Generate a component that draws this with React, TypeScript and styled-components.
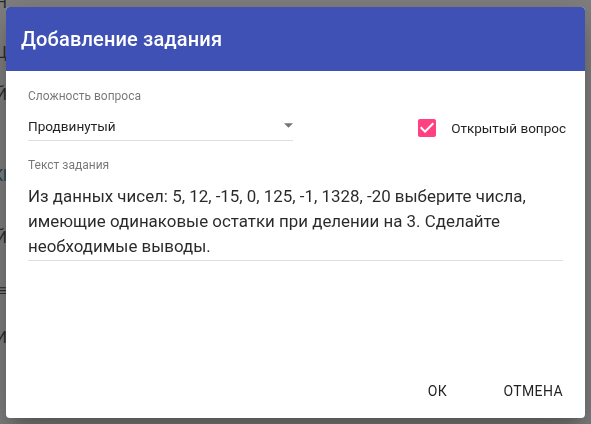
import React from "react";
import styled, { createGlobalStyle } from "styled-components";

const GlobalStyle = createGlobalStyle`
  html, body { margin: 0; padding: 0; }
  body {
    width: 591px;
    height: 424px;
    overflow: hidden;
    background: #ffffff;
    font-family: Roboto, "Noto Sans", Arial, sans-serif;
  }
`;

const Page = styled.div`
  width: 591px;
  height: 424px;
  display: flex;
  flex-direction: column;
  background: #fff;
`;

const EdgeColumn = styled.div`
  width: 7px;
  display: flex;
  flex-direction: column;
  overflow: hidden;
`;

const EdgeWord = styled.div<{ $top: number; $color?: string }>`
  margin-top: ${(p) => p.$top}px;
  height: 14px;
  display: flex;
  justify-content: flex-end;
  white-space: nowrap;
  font-size: 16px;
  line-height: 14px;
  color: ${(p) => p.$color || "#5a5a5a"};
`;

const Backdrop = styled.div`
  position: fixed;
  inset: 0;
  background: rgba(0, 0, 0, 0.5);
  display: flex;
  align-items: center;
  justify-content: center;
`;

const Dialog = styled.div`
  width: 579px;
  height: 411px;
  background: #fff;
  border-radius: 4px;
  overflow: hidden;
  display: flex;
  flex-direction: column;
  box-shadow: 0px 11px 15px -7px rgba(0, 0, 0, 0.2),
    0px 24px 38px 3px rgba(0, 0, 0, 0.14), 0px 9px 46px 8px rgba(0, 0, 0, 0.12);
`;

const Header = styled.div`
  height: 64px;
  flex-shrink: 0;
  display: flex;
  align-items: center;
  padding-left: 15px;
  background: #3f51b5;
  color: #fff;
  font-size: 20px;
  font-weight: 500;
  letter-spacing: 0.0075em;
`;

const Body = styled.div`
  flex: 1;
  display: flex;
  flex-direction: column;
  padding: 19px 22px 0;
`;

const TopRow = styled.div`
  display: flex;
  align-items: flex-end;
  justify-content: space-between;
`;

const Field = styled.div<{ $width?: number }>`
  display: flex;
  flex-direction: column;
  width: ${(p) => (p.$width ? `${p.$width}px` : "auto")};
`;

const Label = styled.div`
  font-size: 12px;
  line-height: 12px;
  color: rgba(0, 0, 0, 0.54);
`;

const SelectBox = styled.div`
  margin-top: 10px;
  padding: 5px 0 5px;
  display: flex;
  align-items: center;
  justify-content: space-between;
  border-bottom: 1px solid rgba(0, 0, 0, 0.13);
  font-size: 13.6px;
  line-height: 18px;
  color: rgba(0, 0, 0, 0.87);
`;

const Arrow = styled.svg`
  width: 9px;
  height: 5px;
  margin-right: 0px;
  fill: rgba(0, 0, 0, 0.54);
`;

const CheckGroup = styled.label`
  display: flex;
  align-items: center;
  gap: 12px;
  margin-bottom: 1px;
  margin-right: -3px;
  font-size: 13.5px;
  color: rgba(0, 0, 0, 0.87);
`;

const CheckIcon = styled.svg`
  width: 24px;
  height: 24px;
  fill: #ff4081;
  display: block;
`;

const TaskField = styled(Field)`
  margin-top: 18px;
`;

const TaskText = styled.div`
  margin-top: 13px;
  padding-bottom: 1px;
  border-bottom: 1px solid rgba(0, 0, 0, 0.13);
  font-size: 16.9px;
  line-height: 25px;
  color: rgba(0, 0, 0, 0.84);
`;

const Actions = styled.div`
  display: flex;
  justify-content: flex-end;
  align-items: center;
  gap: 26px;
  padding: 0 14px 9px 0;
`;

const TextButton = styled.button`
  min-width: 64px;
  height: 36px;
  padding: 0 8px;
  border: none;
  background: transparent;
  font-family: Roboto, Arial, sans-serif;
  font-size: 14px;
  font-weight: 400;
  letter-spacing: 0.02857em;
  text-transform: uppercase;
  color: rgba(0, 0, 0, 0.87);
  cursor: pointer;
`;

export default function App() {
  return (
    <>
      <GlobalStyle />
      <Page>
        <EdgeColumn>
          <EdgeWord $top={-4}>ДОБАВЛЕН</EdgeWord>
          <EdgeWord $top={36}>ЗАДАНИЦ</EdgeWord>
          <EdgeWord $top={28}>ПРОДВИНУТЫЙ</EdgeWord>
          <EdgeWord $top={67} $color="#3a8f9a">СПИСОКl</EdgeWord>
          <EdgeWord $top={48}>ОТКРЫТЫЙ</EdgeWord>
          <EdgeWord $top={39}>МЕНЮ≡</EdgeWord>
          <EdgeWord $top={33}>ВЫВОДЫИ</EdgeWord>
        </EdgeColumn>
      </Page>
      <Backdrop>
        <Dialog role="dialog">
          <Header>Добавление задания</Header>
          <Body>
            <TopRow>
              <Field $width={265}>
                <Label>Сложность вопроса</Label>
                <SelectBox>
                  <span>Продвинутый</span>
                  <Arrow viewBox="7 10 10 5">
                    <path d="M7 10l5 5 5-5z" />
                  </Arrow>
                </SelectBox>
              </Field>
              <CheckGroup>
                <CheckIcon viewBox="0 0 24 24">
                  <path d="M19 3H5c-1.11 0-2 .9-2 2v14c0 1.1.89 2 2 2h14c1.11 0 2-.9 2-2V5c0-1.1-.89-2-2-2zm-9 14l-5-5 1.41-1.41L10 14.17l7.59-7.59L19 8l-9 9z" />
                </CheckIcon>
                <span>Открытый вопрос</span>
              </CheckGroup>
            </TopRow>
            <TaskField>
              <Label>Текст задания</Label>
              <TaskText>
                Из данных чисел: 5, 12, -15, 0, 125, -1, 1328, -20 выберите числа,
                имеющие одинаковые остатки при делении на 3. Сделайте
                необходимые выводы.
              </TaskText>
            </TaskField>
          </Body>
          <Actions>
            <TextButton>ОК</TextButton>
            <TextButton>Отмена</TextButton>
          </Actions>
        </Dialog>
      </Backdrop>
    </>
  );
}
